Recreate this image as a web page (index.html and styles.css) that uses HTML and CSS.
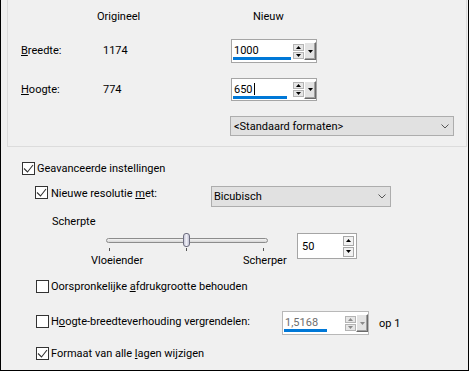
FILE: index.html
```html
<!DOCTYPE html>
<html>
<head>
<meta charset="utf-8">
<link rel="stylesheet" href="styles.css">
</head>
<body>
<div class="win">
  <div class="group">
    <div class="hdr"><span class="c1">Origineel</span><span>Nieuw</span></div>
    <div class="dim dim1">
      <span class="lbl"><u>B</u>reedte:</span>
      <span class="orig">1174</span>
      <div class="spin sp-main">
        <div class="field"><span class="val">1000</span><span class="bar" style="width:58px"></span></div>
        <div class="arr">
          <span class="ab"><svg width="5" height="3" viewBox="0 0 5 3"><polygon points="2.5,0 5,3 0,3" fill="#000"/></svg></span>
          <span class="ab"><svg width="5" height="3" viewBox="0 0 5 3"><polygon points="0,0 5,0 2.5,3" fill="#000"/></svg></span>
        </div>
        <span class="drop"><svg width="5" height="3" viewBox="0 0 5 3"><polygon points="0,0 5,0 2.5,3" fill="#000"/></svg></span>
      </div>
    </div>
    <div class="dim dim2">
      <span class="lbl"><u>H</u>oogte:</span>
      <span class="orig">774</span>
      <div class="spin sp-main">
        <div class="field"><span class="val">650<i class="caret"></i></span><span class="bar" style="width:54px"></span></div>
        <div class="arr">
          <span class="ab"><svg width="5" height="3" viewBox="0 0 5 3"><polygon points="2.5,0 5,3 0,3" fill="#000"/></svg></span>
          <span class="ab"><svg width="5" height="3" viewBox="0 0 5 3"><polygon points="0,0 5,0 2.5,3" fill="#000"/></svg></span>
        </div>
        <span class="drop"><svg width="5" height="3" viewBox="0 0 5 3"><polygon points="0,0 5,0 2.5,3" fill="#000"/></svg></span>
      </div>
    </div>
    <div class="presets">
      <div class="combo cb-wide"><span>&lt;Standaard formaten&gt;</span><svg width="8" height="5" viewBox="0 0 8 5"><polyline points="0.5,0.5 4,4 7.5,0.5" fill="none" stroke="#555" stroke-width="1"/></svg></div>
    </div>
  </div>

  <div class="opts">
    <label class="chk adv"><span class="box"><svg width="11" height="11" viewBox="0 0 11 11"><polyline points="1,5.5 4.5,9 10,2" fill="none" stroke="#333" stroke-width="1.1"/></svg></span><span>Geavanceerde instellingen</span></label>

    <div class="res">
      <label class="chk"><span class="box"><svg width="11" height="11" viewBox="0 0 11 11"><polyline points="1,5.5 4.5,9 10,2" fill="none" stroke="#333" stroke-width="1.1"/></svg></span><span class="txt-low">Nieuwe resolutie <u>m</u>et:</span></label>
      <div class="combo cb-bic"><span>Bicubisch</span><svg width="8" height="5" viewBox="0 0 8 5"><polyline points="0.5,0.5 4,4 7.5,0.5" fill="none" stroke="#555" stroke-width="1"/></svg></div>
    </div>

    <div class="scl">Scherpte</div>

    <div class="sharp">
      <div class="slider">
        <div class="track"><span class="thumb"></span></div>
        <div class="ticks"><i></i><i></i><i></i></div>
        <div class="ends"><span class="e1">Vloeiender</span><span>Scherper</span></div>
      </div>
      <div class="spin sp50">
        <span class="val v50">50</span>
        <div class="arr arr50">
          <span class="ab"><svg width="5" height="3" viewBox="0 0 5 3"><polygon points="2.5,0 5,3 0,3" fill="#000"/></svg></span>
          <span class="ab"><svg width="5" height="3" viewBox="0 0 5 3"><polygon points="0,0 5,0 2.5,3" fill="#000"/></svg></span>
        </div>
      </div>
    </div>

    <label class="chk keep"><span class="box"></span><span>Oorspronkelijke <u>a</u>fdrukgrootte behouden</span></label>

    <div class="lock">
      <label class="chk"><span class="box"></span><span>H<u>o</u>ogte-breedteverhouding vergrendelen:</span></label>
      <div class="spin sp-dis">
        <div class="field"><span class="val dis">1,5168</span><span class="bar" style="width:43px"></span></div>
        <div class="arr">
          <span class="ab"><svg width="5" height="3" viewBox="0 0 5 3"><polygon points="2.5,0 5,3 0,3" fill="#8a8a8a"/></svg></span>
          <span class="ab"><svg width="5" height="3" viewBox="0 0 5 3"><polygon points="0,0 5,0 2.5,3" fill="#8a8a8a"/></svg></span>
        </div>
        <span class="drop"><svg width="5" height="3" viewBox="0 0 5 3"><polygon points="0,0 5,0 2.5,3" fill="#8a8a8a"/></svg></span>
      </div>
      <span class="op">op 1</span>
    </div>

    <label class="chk layers"><span class="box"><svg width="11" height="11" viewBox="0 0 11 11"><polyline points="1,5.5 4.5,9 10,2" fill="none" stroke="#333" stroke-width="1.1"/></svg></span><span>Formaat van alle <u>l</u>agen wijzigen</span></label>
  </div>
</div>
</body>
</html>
```
FILE: styles.css
```css
*{box-sizing:border-box}
body{margin:0;font:11px Roboto,"Liberation Sans",sans-serif;color:#000;background:#f0f0f0}
u{text-decoration:underline;text-underline-offset:1px}
.win{width:469px;height:371px;background:#f0f0f0;border:1px solid #000;border-top:0}

/* top group */
.group{margin-left:6px;width:460px;border:1px solid #dcdcdc;border-top:0;padding:0 0 10px 13px}
.hdr{display:flex;padding:9px 0 0 76px;line-height:16px}
.hdr .c1{width:156px}
.dim{display:flex;align-items:center;line-height:16px}
.dim1{margin-top:14px;height:24px}
.dim2{margin-top:15px;height:23px}
.lbl{width:82px}
.orig{width:128px}
.presets{margin-top:15px;padding-left:209px}

/* spin box */
.spin{display:flex;align-items:center;background:#fff;border:1px solid #a5a5a5;height:100%}
.sp-main{width:86px}
.field{flex:1;align-self:stretch;display:flex;flex-direction:column;padding:4px 0 0 1px}
.val{line-height:13px;padding-left:1px;white-space:nowrap}
.val.dis{color:#6d6d6d}
.bar{height:3px;background:#0078d7}
.caret{display:inline-block;width:1px;height:12px;background:#000;vertical-align:-2px;margin-left:1px}
.arr{display:flex;flex-direction:column;gap:1px;width:11px}
.ab{height:7px;border:1px solid #b4b4b4;background:#e6e6e6;display:flex;align-items:center;justify-content:center}
.drop{width:12px;height:18px;border:1px solid;border-color:#fff #6a6a6a #6a6a6a #fff;background:#e3e3e3;display:flex;align-items:center;justify-content:center;box-shadow:inset -1px -1px 0 #a0a0a0}
.sp50{width:60px;height:26px;padding-right:2px}
.v50{flex:1;padding-left:4px}
.arr50 .ab{height:10px;background:#f2f2f2;border-color:#a8a8a8}
.sp-dis{width:87px;height:24px;border-color:#b8b8b8}

/* combos */
.combo{display:flex;align-items:center;justify-content:space-between;background:#e1e1e1;border:1px solid #adadad;padding:0 4px 0 3px;line-height:13px}
.cb-wide{width:224px;height:20px}
.cb-bic{width:180px;height:21px;padding-left:2px}

/* options */
.opts{display:flex;flex-direction:column;align-items:flex-start}
.chk{display:flex;align-items:center;gap:2px;height:13px;line-height:13px;white-space:nowrap}
.box{width:13px;height:13px;border:1px solid #333;background:#fff;display:flex;flex:none}
.adv{margin:15px 0 0 21px}
.res{display:flex;align-items:flex-start;margin:11px 0 0 34px;height:21px}
.res .chk{width:176px;gap:3px}
.txt-low{padding-top:2px}
.scl{margin:7px 0 0 51px;line-height:16px}
.sharp{display:flex;margin:3px 0 0 90px}
.slider{width:206px}
.track{position:relative;margin:5px 0 0 15px;width:162px;height:5px;border:1px solid #8c8c8c;border-radius:3px;background:linear-gradient(#f4f4f4,#d6d6d6)}
.thumb{position:absolute;left:76px;top:-6px;width:7px;height:14px;border:1px solid #6e6e80;border-radius:3px;background:linear-gradient(90deg,#c9c9d8,#eeeef6 50%,#c4c4d4)}
.ticks{display:flex;justify-content:space-between;margin:5px 0 0 18px;width:155px;height:3px}
.ticks i{width:1px;background:#555}
.ends{display:flex;margin-top:2px;line-height:16px}
.ends .e1{width:152px}
.keep{margin:11px 0 0 35px}
.lock{display:flex;align-items:flex-start;margin:18px 0 0 35px;height:24px}
.lock .chk{width:246px;margin-top:4px}
.op{align-self:center;margin-left:10px;line-height:13px}
.layers{margin:12px 0 0 35px}
```
